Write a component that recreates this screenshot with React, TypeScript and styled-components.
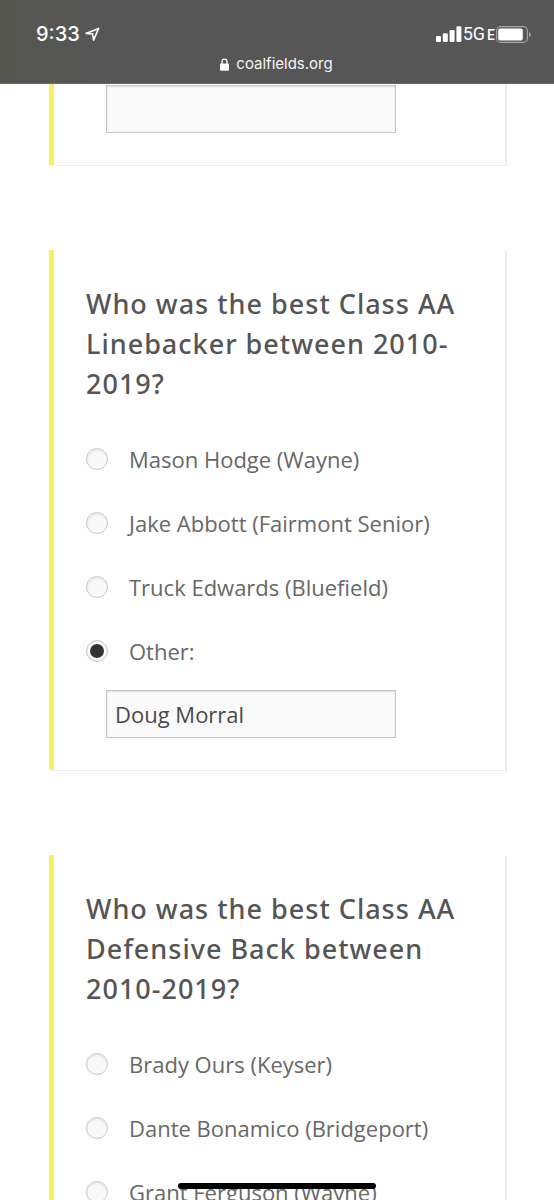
import React from 'react';
import styled, { createGlobalStyle } from 'styled-components';

const GlobalStyle = createGlobalStyle`
  *, *::before, *::after { box-sizing: border-box; }
  body {
    margin: 0;
    background: #fefefe;
    font-family: 'Open Sans', 'Noto Sans', sans-serif;
  }
`;

const Screen = styled.div`
  position: relative;
  display: flex;
  flex-direction: column;
  height: 100vh;
  overflow: hidden;
`;

const BrowserBar = styled.header`
  position: relative;
  z-index: 1;
  flex: none;
  display: flex;
  flex-direction: column;
  gap: 8px;
  padding: 22px 23px 9px 36px;
  background: linear-gradient(90deg, #555550 0, #565656 110px);
  border-bottom: 1px solid #6a6a6a;
  color: #fff;
  font-family: Inter, 'Liberation Sans', sans-serif;
`;

const StatusRow = styled.div`
  display: flex;
  align-items: center;
  justify-content: space-between;
  height: 24px;
`;

const StatusGroup = styled.div<{ $gap: number }>`
  display: flex;
  align-items: center;
  gap: ${({ $gap }) => $gap}px;
`;

const Clock = styled.time`
  font-size: 20px;
  font-weight: 500;
  line-height: 24px;
`;

const Network = styled.span`
  font-family: Roboto, 'Liberation Sans', sans-serif;
  font-size: 18px;
  line-height: 24px;
`;

const NetworkSuffix = styled.span`
  margin-left: 2px;
  font-size: 14px;
  font-weight: 500;
`;

const Address = styled.div`
  display: flex;
  align-items: center;
  justify-content: center;
  gap: 7px;
  padding-right: 14px;
  font-size: 15px;
  line-height: 20px;
  color: #f4f4f4;
`;

const Page = styled.main`
  flex: 1;
  min-height: 0;
  display: flex;
  flex-direction: column;
  gap: 85px;
  padding: 0 49px;
`;

const Card = styled.section<{ $continued?: boolean }>`
  flex: none;
  padding: ${({ $continued }) => ($continued ? 2 : 34)}px 32px 32px;
  margin-top: ${({ $continued }) => ($continued ? -1 : 0)}px;
  border-left: 5px solid #f9f15b;
  background: #fefefe;
  box-shadow: 2px 1px 0 #eeeeee;
`;

const Question = styled.h2`
  margin: 0 0 23px;
  font-family: 'Noto Sans', 'Open Sans', sans-serif;
  font-size: 27px;
  font-weight: 500;
  line-height: 40px;
  letter-spacing: 1px;
  color: #555;
`;

const Option = styled.label`
  display: flex;
  align-items: center;
  gap: 21px;
  height: 64px;
  font-size: 22px;
  line-height: 32px;
  color: #686868;
  white-space: nowrap;
`;

const Radio = styled.input`
  appearance: none;
  flex: none;
  display: grid;
  place-content: center;
  width: 22px;
  height: 22px;
  margin: 0;
  border: 1px solid #c8c8c8;
  border-radius: 50%;
  background: #f9f9f9;
  box-shadow: inset 0 2px 2px #e9e9e9;

  &:checked {
    background: #fefefe;
    box-shadow: inset 0 0 2px #d8d8d8;
  }

  &:checked::before {
    content: '';
    width: 14px;
    height: 14px;
    border-radius: 50%;
    background: #333;
  }
`;

const OtherField = styled.input`
  display: block;
  width: calc(100% - 97px);
  height: 48px;
  margin: 0 0 0 20px;
  padding: 0 8px 1px;
  border: 1px solid #c6c6c6;
  border-radius: 0;
  background: #fafafa;
  box-shadow: inset 0 1px 2px #dcdcdc;
  font: inherit;
  font-size: 22px;
  color: #4a4a4a;
`;

const Answers = styled.div`
  display: flex;
  flex-direction: column;
  gap: 7px;
`;

const OptionList = styled.div`
  display: flex;
  flex-direction: column;
`;

const HomeIndicator = styled.div`
  position: absolute;
  bottom: 11px;
  left: 50%;
  width: 198px;
  height: 6px;
  transform: translateX(-50%);
  border-radius: 3px;
  background: #000;
`;

const LocationIcon = () => (
  <svg width="15" height="15" viewBox="0 0 15 15" aria-hidden="true">
    <path d="M1 6.4 13.6 1.4 8.6 13.2 7.6 6.9Z" fill="none" stroke="#fff" strokeWidth="1.6" strokeLinejoin="round" />
  </svg>
);

const LockIcon = () => (
  <svg width="9" height="13" viewBox="0 0 9 13" aria-hidden="true">
    <rect x="0" y="5.6" width="9" height="7.2" rx="1.2" fill="#fff" />
    <path d="M2 6V3.6a2.5 2.5 0 0 1 5 0V6" fill="none" stroke="#fff" strokeWidth="1.3" />
  </svg>
);

const SignalIcon = () => (
  <svg width="26" height="16" viewBox="0 0 26 16" fill="#fff" aria-hidden="true">
    <rect x="0" y="10" width="5" height="6" rx="1.2" />
    <rect x="6.8" y="7.2" width="5" height="8.8" rx="1.2" />
    <rect x="13.6" y="4" width="5" height="12" rx="1.2" />
    <rect x="20.4" y="0.3" width="5" height="15.7" rx="1.2" />
  </svg>
);

const BatteryIcon = () => (
  <svg width="35" height="17" viewBox="0 0 35 17" aria-hidden="true">
    <rect x="0.6" y="0.6" width="30.8" height="15.8" rx="4" fill="none" stroke="#a6a6a6" strokeWidth="1.1" />
    <rect x="2.2" y="2.6" width="24.6" height="11.8" rx="2" fill="#fff" />
    <path d="M33 6v5c1-.4 1.7-1.4 1.7-2.5S34 6.4 33 6Z" fill="#a6a6a6" />
  </svg>
);

interface QuestionCardProps {
  id: string;
  title: string;
  options: string[];
  selected?: string;
  other?: string;
}

const QuestionCard = ({ id, title, options, selected, other }: QuestionCardProps) => (
  <Card aria-labelledby={`${id}-title`}>
    <Question id={`${id}-title`}>{title}</Question>
    <Answers>
      <OptionList role="radiogroup" aria-labelledby={`${id}-title`}>
        {options.map((option) => (
          <Option key={option}>
            <Radio type="radio" name={id} value={option} defaultChecked={option === selected} />
            {option}
          </Option>
        ))}
      </OptionList>
      {other !== undefined && <OtherField type="text" aria-label="Other" defaultValue={other} />}
    </Answers>
  </Card>
);

export default function App() {
  return (
    <>
      <GlobalStyle />
      <Screen>
        <BrowserBar>
          <StatusRow>
            <StatusGroup $gap={5}>
              <Clock>9:33</Clock>
              <LocationIcon />
            </StatusGroup>
            <StatusGroup $gap={1}>
              <SignalIcon />
              <Network>
                5G<NetworkSuffix>E</NetworkSuffix>
              </Network>
              <BatteryIcon />
            </StatusGroup>
          </StatusRow>
          <Address>
            <LockIcon />
            <span>coalfields.org</span>
          </Address>
        </BrowserBar>
        <Page>
          <Card $continued>
            <OtherField type="text" aria-label="Other" />
          </Card>
          <QuestionCard
            id="linebacker"
            title="Who was the best Class AA Linebacker between 2010-2019?"
            options={[
              'Mason Hodge (Wayne)',
              'Jake Abbott (Fairmont Senior)',
              'Truck Edwards (Bluefield)',
              'Other:',
            ]}
            selected="Other:"
            other="Doug Morral"
          />
          <QuestionCard
            id="defensive-back"
            title="Who was the best Class AA Defensive Back between 2010-2019?"
            options={['Brady Ours (Keyser)', 'Dante Bonamico (Bridgeport)', 'Grant Ferguson (Wayne)']}
          />
        </Page>
        <HomeIndicator />
      </Screen>
    </>
  );
}
